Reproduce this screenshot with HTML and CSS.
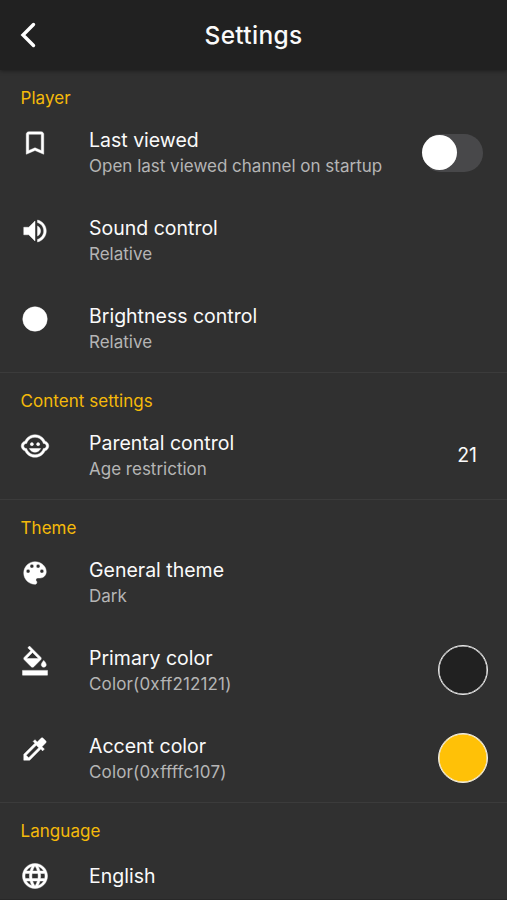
FILE: index.html
```html
<!DOCTYPE html>
<html lang="en">
<head>
<meta charset="utf-8">
<title>Settings</title>
<link rel="stylesheet" href="styles.css">
</head>
<body>
<header class="bar">
  <svg class="back" viewBox="0 0 16 26"><path d="M13.500 2.500L3 13l10.500 10.500"/></svg>
  <h1>Settings</h1>
</header>
<main>
  <section>
    <h2>Player</h2>
    <div class="row">
      <svg class="icon" viewBox="0 0 24 24"><path d="M17 3H7c-1.1 0-2 .9-2 2v16l7-3 7 3V5c0-1.1-.9-2-2-2zm0 15-5-2.180L7 18V5h10v13z"/></svg>
      <div class="text"><p class="name">Last viewed</p><p class="detail">Open last viewed channel on startup</p></div>
      <span class="switch"><span class="thumb"></span></span>
    </div>
    <div class="row">
      <svg class="icon" viewBox="0 0 24 24"><path d="M3 9v6h4l5 5V4L7 9H3zm13.5 3c0-1.77-1.02-3.29-2.5-4.03v8.05c1.48-.73 2.5-2.25 2.5-4.02zM14 3.23v2.06c2.89.86 5 3.54 5 6.71s-2.11 5.85-5 6.71v2.06c4.01-.91 7-4.49 7-8.77s-2.99-7.86-7-8.77z"/></svg>
      <div class="text"><p class="name">Sound control</p><p class="detail">Relative</p></div>
    </div>
    <div class="row">
      <svg class="icon" viewBox="0 0 24 24"><circle cx="12" cy="12" r="9.800"/></svg>
      <div class="text"><p class="name">Brightness control</p><p class="detail">Relative</p></div>
    </div>
  </section>
  <section>
    <h2>Content settings</h2>
    <div class="row">
      <svg class="icon" viewBox="0 0 24 24"><circle cx="14.5" cy="10.5" r="1.25"/><circle cx="9.5" cy="10.5" r="1.25"/><path d="M22.94 12.66c.04-.21.06-.43.06-.66s-.02-.45-.06-.66c-.25-1.51-1.36-2.74-2.81-3.17-.53-1.12-1.28-2.1-2.19-2.91C16.36 3.85 14.28 3 12 3s-4.36.85-5.94 2.26c-.92.81-1.67 1.8-2.19 2.91-1.45.43-2.56 1.65-2.81 3.17-.04.21-.06.43-.06.66s.02.45.06.66c.25 1.51 1.36 2.74 2.81 3.17.52 1.11 1.27 2.09 2.17 2.89C7.62 20.14 9.71 21 12 21s4.38-.86 5.97-2.28c.9-.8 1.65-1.79 2.17-2.89 1.44-.43 2.55-1.65 2.8-3.17zM19 14c-.1 0-.19-.02-.29-.03-.2.67-.49 1.29-.86 1.86C16.6 17.74 14.45 19 12 19s-4.6-1.26-5.85-3.17c-.37-.57-.66-1.19-.86-1.86-.1.01-.19.03-.29.03-1.1 0-2-.9-2-2s.9-2 2-2c.1 0 .19.02.29.03.2-.67.49-1.29.86-1.86C7.4 6.26 9.55 5 12 5s4.6 1.26 5.85 3.17c.37.57.66 1.19.86 1.86.1-.01.19-.03.29-.03 1.1 0 2 .9 2 2s-.9 2-2 2zM7.5 14c.76 1.77 2.49 3 4.5 3s3.74-1.23 4.5-3h-9z"/></svg>
      <div class="text"><p class="name">Parental control</p><p class="detail">Age restriction</p></div>
      <span class="value">21</span>
    </div>
  </section>
  <section>
    <h2>Theme</h2>
    <div class="row">
      <svg class="icon" viewBox="0 0 24 24"><path d="M12 3c-4.97 0-9 4.03-9 9s4.03 9 9 9c.83 0 1.5-.67 1.5-1.5 0-.39-.15-.74-.39-1.01-.23-.26-.38-.61-.38-.99 0-.83.67-1.5 1.5-1.5H16c2.76 0 5-2.24 5-5 0-4.42-4.03-8-9-8zm-5.5 9c-.83 0-1.5-.67-1.5-1.5S5.67 9 6.5 9 8 9.67 8 10.5 7.33 12 6.5 12zm3-4C8.67 8 8 7.33 8 6.5S8.67 5 9.5 5s1.5.67 1.5 1.5S10.33 8 9.5 8zm5 0c-.83 0-1.5-.67-1.5-1.5S13.67 5 14.5 5s1.5.67 1.5 1.5S15.33 8 14.5 8zm3 4c-.83 0-1.5-.67-1.5-1.5S16.67 9 17.5 9s1.5.67 1.5 1.5-.67 1.5-1.5 1.5z"/></svg>
      <div class="text"><p class="name">General theme</p><p class="detail">Dark</p></div>
    </div>
    <div class="row">
      <svg class="icon" viewBox="0 0 24 24"><path d="M16.56 8.94L7.62 0 6.21 1.41l2.38 2.38-5.15 5.15c-.59.59-.59 1.54 0 2.12l5.5 5.5c.29.29.68.44 1.06.44s.77-.15 1.06-.44l5.5-5.5c.59-.58.59-1.53 0-2.12zM5.21 10L10 5.21 14.79 10H5.21zM19 11.500s-2 2.170-2 3.500c0 1.100.9 2 2 2s2-.9 2-2c0-1.330-2-3.500-2-3.500zM2 19.500h20v3.800H2z"/></svg>
      <div class="text"><p class="name">Primary color</p><p class="detail wide">Color(0xff212121)</p></div>
      <span class="swatch primary"></span>
    </div>
    <div class="row">
      <svg class="icon" viewBox="0 0 24 24"><path d="M20.71 5.630l-2.340-2.340c-.39-.39-1.020-.39-1.410 0l-3.120 3.120-1.930-1.910-1.410 1.410 1.420 1.420L3 16.250V21h4.750l8.920-8.920 1.420 1.420 1.410-1.410-1.920-1.920 3.120-3.120c.4-.4.4-1.030.01-1.420zM6.920 19L5 17.080l8.060-8.060 1.920 1.920L6.920 19z"/></svg>
      <div class="text"><p class="name">Accent color</p><p class="detail wide">Color(0xffffc107)</p></div>
      <span class="swatch accent"></span>
    </div>
  </section>
  <section>
    <h2>Language</h2>
    <div class="row single">
      <svg class="icon" viewBox="0 0 24 24"><path d="M11.990 2C6.470 2 2 6.480 2 12s4.470 10 9.990 10C17.520 22 22 17.520 22 12S17.520 2 11.990 2zm6.930 6h-2.950c-.32-1.250-.78-2.450-1.380-3.560 1.840.63 3.370 1.910 4.330 3.560zM12 4.040c.83 1.200 1.480 2.530 1.910 3.960h-3.820c.43-1.430 1.080-2.760 1.910-3.960zM4.260 14C4.100 13.360 4 12.690 4 12s.1-1.360.26-2h3.380c-.08.66-.14 1.320-.14 2s.06 1.340.14 2H4.260zm.82 2h2.950c.32 1.250.78 2.450 1.380 3.560-1.840-.63-3.370-1.900-4.330-3.560zm2.950-8H5.080c.96-1.660 2.490-2.930 4.330-3.560C8.810 5.550 8.350 6.750 8.030 8zM12 19.960c-.83-1.200-1.480-2.530-1.910-3.960h3.820c-.43 1.430-1.080 2.760-1.910 3.960zM14.340 14H9.660c-.09-.66-.16-1.320-.16-2s.07-1.350.16-2h4.680c.09.65.16 1.320.16 2s-.07 1.340-.16 2zm.25 5.560c.6-1.110 1.060-2.310 1.380-3.560h2.950c-.96 1.650-2.490 2.930-4.330 3.560zM16.360 14c.08-.66.14-1.320.14-2s-.06-1.340-.14-2h3.380c.16.64.26 1.310.26 2s-.1 1.360-.26 2h-3.380z"/></svg>
      <p class="name">English</p>
    </div>
  </section>
</main>
</body>
</html>
```
FILE: styles.css
```css
* { box-sizing: border-box; }
body {
  margin: 0;
  height: 900px;
  overflow: hidden;
  display: flex;
  flex-direction: column;
  background: #303030;
  color: #fafafa;
  font-family: Inter, "Liberation Sans", sans-serif;
  border-bottom: 1px solid #282828;
}
h1, h2, p { margin: 0; font-weight: 400; }
svg { fill: #fff; display: block; }
.bar {
  flex: none;
  height: 70px;
  display: grid;
  grid-template-columns: 1fr auto 1fr;
  align-items: center;
  padding-left: 20px;
  padding-right: 20px;
  background: #212121;
  box-shadow: 0 1px 4px rgba(0, 0, 0, .4);
  z-index: 1;
}
.back { width: 16px; height: 26px; fill: none; stroke: #fff; stroke-width: 3.400; stroke-linecap: round; }
h1 { font-size: 24.500px; font-weight: 500; line-height: 30px; letter-spacing: .3px; }
main { flex: 1; min-height: 0; overflow: hidden; }
section { border-bottom: 1px solid #3b3b3b; }
section:last-child { border-bottom: 0; }
h2 { height: 38px; padding: 17px 20.500px 0; font-size: 17px; line-height: 22px; letter-spacing: .05px; color: #f5ba0a; }
.row { height: 88px; display: flex; align-items: center; padding: 0 19px 0 20px; }
.icon { width: 30px; height: 30px; flex: none; margin-right: 39px; align-self: flex-start; margin-top: 19.500px; stroke: #fff; stroke-width: .35; }
.text { flex: 1; align-self: flex-start; padding-top: 19px; }
.name { font-size: 19.500px; line-height: 26px; }
.detail { padding-top: 1px; font-size: 17px; line-height: 24px; color: #b5b5b5; }
.wide { letter-spacing: .16px; }
.switch { width: 61px; height: 38px; margin-right: 5px; margin-top: 1px; border-radius: 19px; background: linear-gradient(90deg, transparent 8px, #48484a 8px); padding: 1.500px 0; }
.thumb { display: block; width: 35px; height: 35px; border-radius: 50%; background: #fff; }
.value { font-size: 19.500px; margin-right: 11px; }
.swatch { width: 50px; height: 50px; border-radius: 50%; border: 1px solid #eee; box-shadow: inset 0 0 0 .5px #eee; }
.primary { background: #212121; }
.accent { background: #ffc107; }
.single .name { align-self: flex-start; padding-top: 22px; }
```
